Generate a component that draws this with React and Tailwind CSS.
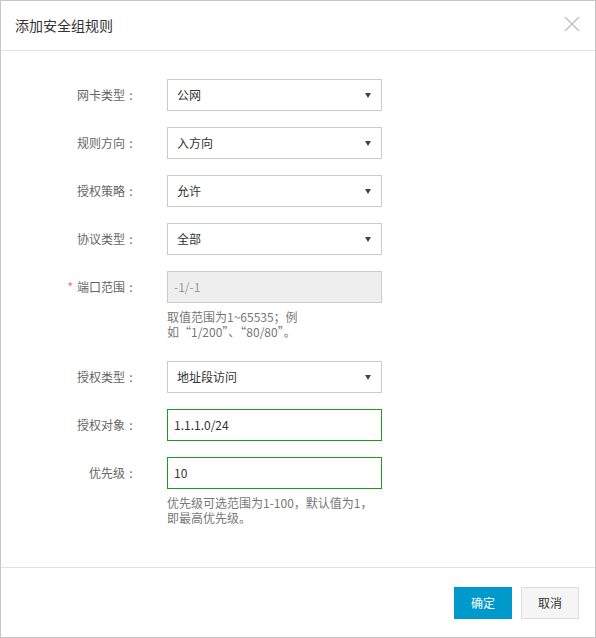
import React from "react";

const font = { fontFamily: '"Noto Sans CJK SC", "Noto Sans", sans-serif' };

function Arrow() {
  return (
    <svg width="6" height="5" viewBox="0 0 6 5" className="absolute right-[10px] top-[13px]">
      <path d="M0 0 H6 L3 5 Z" fill="#444" />
    </svg>
  );
}

function Select({ value }) {
  return (
    <div className="relative w-[215px] h-[32px] border border-[#cccccc] bg-white pl-[9px] text-[12px] leading-[30px] text-[#333]">
      {value}
      <Arrow />
    </div>
  );
}

function Input({ value, disabled, focus }) {
  return (
    <div
      className={
        "w-[215px] h-[32px] border pl-[6px] text-[12px] leading-[30px] " +
        (disabled
          ? "border-[#cccccc] bg-[#eeeeee] text-[#999]"
          : focus
          ? "border-[#1f9a1f] bg-white text-[#333]"
          : "border-[#cccccc] bg-white text-[#333]")
      }
    >
      {value}
    </div>
  );
}

function Row({ label, required, children, help }) {
  return (
    <div className="flex items-start mb-[16px]">
      <div className="w-[136px] h-[32px] leading-[32px] text-right text-[12px] text-[#666] shrink-0">
        {required && <span className="text-[#ff6a6a] mr-[4px]">*</span>}
        {label}
        <span className="inline-block w-[12px] text-center">:</span>
      </div>
      <div className="ml-[30px]">
        {children}
        {help && (
          <div className="pt-[6px] pb-[6px] text-[12px] leading-[15px] text-[#777]">
            {help}
          </div>
        )}
      </div>
    </div>
  );
}

export default function App() {
  return (
    <div style={font} className="w-[596px] h-[638px] border border-[#c6c6c6] bg-white flex flex-col">
      {/* 标题 */}
      <div className="h-[50px] shrink-0 border-b border-[#e1e1e1] flex items-center justify-between pl-[14px] pr-[15px]">
        <span className="text-[14px] text-[#333]">添加安全组规则</span>
        <button className="-mt-[4px] w-[16px] h-[16px] flex items-center justify-center">
          <svg width="16" height="16" viewBox="0 0 16 16">
            <path d="M1 1 L15 15 M15 1 L1 15" stroke="#c4c4c4" strokeWidth="1.5" fill="none" />
          </svg>
        </button>
      </div>

      {/* 表单 */}
      <div className="flex-1 pt-[28px]">
        <Row label="网卡类型">
          <Select value="公网" />
        </Row>
        <Row label="规则方向">
          <Select value="入方向" />
        </Row>
        <Row label="授权策略">
          <Select value="允许" />
        </Row>
        <Row label="协议类型">
          <Select value="全部" />
        </Row>
        <Row
          label="端口范围"
          required
          help={
            <>
              <div>取值范围为1~65535；例</div>
              <div>如“1/200”、“80/80”。</div>
            </>
          }
        >
          <Input value="-1/-1" disabled />
        </Row>
        <Row label="授权类型">
          <Select value="地址段访问" />
        </Row>
        <Row label="授权对象">
          <Input value="1.1.1.0/24" focus />
        </Row>
        <Row
          label="优先级"
          help={
            <>
              <div>优先级可选范围为1-100，默认值为1，</div>
              <div>即最高优先级。</div>
            </>
          }
        >
          <Input value="10" focus />
        </Row>
      </div>

      {/* 底部按钮 */}
      <div className="shrink-0 border-t border-[#e1e1e1] pt-[19px] pb-[18px] pr-[16px] flex justify-end">
        <button className="w-[58px] h-[32px] bg-[#0099cc] text-white text-[12px]">确定</button>
        <button className="ml-[9px] w-[58px] h-[32px] bg-[#f5f5f5] border border-[#dddddd] text-[#333] text-[12px]">
          取消
        </button>
      </div>
    </div>
  );
}
